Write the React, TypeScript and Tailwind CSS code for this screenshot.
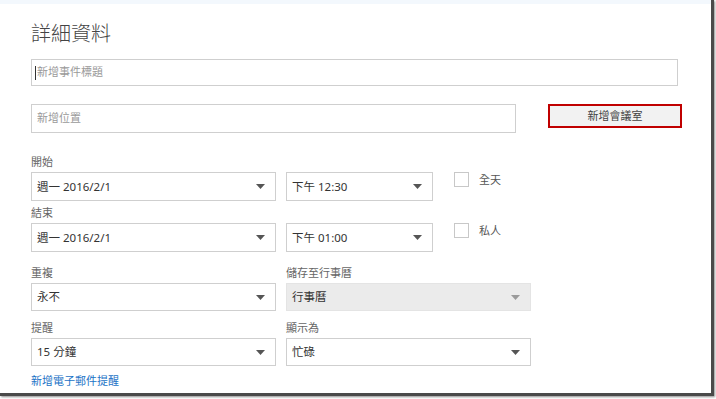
import { ReactNode } from "react";

const font = { fontFamily: '"Noto Sans", "Noto Sans CJK TC", sans-serif' };

function Caret({ muted }: { muted?: boolean }) {
  return (
    <svg width="9" height="5" viewBox="0 0 9 5" className="shrink-0">
      <path d="M0 0 H9 L4.5 5 Z" fill={muted ? "#9a9a9a" : "#555"} />
    </svg>
  );
}

function Select({
  value,
  width,
  disabled,
  height = "h-[29px]",
}: {
  value: string;
  width: string;
  disabled?: boolean;
  height?: string;
}) {
  return (
    <div
      className={`${width} ${height} flex items-center justify-between pl-[5px] pr-[10px] border ${
        disabled ? "bg-[#ebebeb] border-[#e4e4e4]" : "bg-white border-[#cfcfcf]"
      }`}
    >
      <span className="text-[11.5px] text-[#333]">{value}</span>
      <Caret muted={disabled} />
    </div>
  );
}

function Label({ children, className = "" }: { children: ReactNode; className?: string }) {
  return <div className={`h-[18px] text-[11px] leading-[16px] text-[#666] ${className}`}>{children}</div>;
}

function Check({ label }: { label: string }) {
  return (
    <div className="flex items-start ml-[21px]">
      <div className="w-[15px] h-[15px] border border-[#c8c8c8] bg-white" />
      <span className="ml-[10px] text-[11px] leading-[16px] text-[#555]">{label}</span>
    </div>
  );
}

export default function App() {
  return (
    <main className="w-[716px] h-[399px] bg-white overflow-hidden" style={font}>
      <div className="w-[714px] h-[396px] bg-white border-r-[3px] border-b-[3px] border-[#4a4a4a] shadow-[1px_1px_2px_rgba(0,0,0,0.45)]">
        <div className="h-[4px] bg-[#f3f8fd]" />

        <div className="pl-[31px]">
          {/* TITLE */}
          <h1 className="mt-[18px] h-[24px] text-[20px] leading-[24px] text-[#444] font-light">詳細資料</h1>

          {/* EVENT TITLE */}
          <div className="mt-[13px] w-[647px] h-[27px] border border-[#cfcfcf] flex items-center pl-[3px]">
            <div className="w-px h-[14px] bg-[#333]" />
            <span className="ml-[1px] text-[11px] text-[#9a9a9a]">新增事件標題</span>
          </div>

          {/* LOCATION */}
          <div className="mt-[18px] flex items-start">
            <div className="w-[485px] h-[29px] border border-[#cfcfcf] flex items-center pl-[5px]">
              <span className="text-[11px] text-[#9a9a9a]">新增位置</span>
            </div>
            <button className="ml-[32px] w-[134px] h-[24px] border-2 border-[#c00000] bg-[#f2f2f2] flex items-center justify-center text-[11px] text-[#444]">
              新增會議室
            </button>
          </div>

          {/* START */}
          <Label className="mt-[21px]">開始</Label>
          <div className="flex items-start">
            <Select value="週一 2016/2/1" width="w-[245px]" />
            <div className="ml-[10px]">
              <Select value="下午 12:30" width="w-[147px]" />
            </div>
            <Check label="全天" />
          </div>

          {/* END */}
          <Label className="mt-[4px]">結束</Label>
          <div className="flex items-start">
            <Select value="週一 2016/2/1" width="w-[245px]" />
            <div className="ml-[10px]">
              <Select value="下午 01:00" width="w-[147px]" />
            </div>
            <Check label="私人" />
          </div>

          {/* REPEAT / SAVE TO */}
          <div className="mt-[13px] flex">
            <div className="w-[245px]">
              <Label>重複</Label>
              <Select value="永不" width="w-[245px]" height="h-[28px]" />
            </div>
            <div className="ml-[10px] w-[245px]">
              <Label>儲存至行事曆</Label>
              <Select value="行事曆" width="w-[245px]" height="h-[28px]" disabled />
            </div>
          </div>

          {/* REMINDER / SHOW AS */}
          <div className="mt-[9px] flex">
            <div className="w-[245px]">
              <Label>提醒</Label>
              <Select value="15 分鐘" width="w-[245px]" height="h-[28px]" />
            </div>
            <div className="ml-[10px] w-[245px]">
              <Label>顯示為</Label>
              <Select value="忙碌" width="w-[245px]" height="h-[28px]" />
            </div>
          </div>

          <a className="block mt-[7px] text-[11px] leading-[16px] text-[#1a72c6]">新增電子郵件提醒</a>
        </div>
      </div>
    </main>
  );
}
